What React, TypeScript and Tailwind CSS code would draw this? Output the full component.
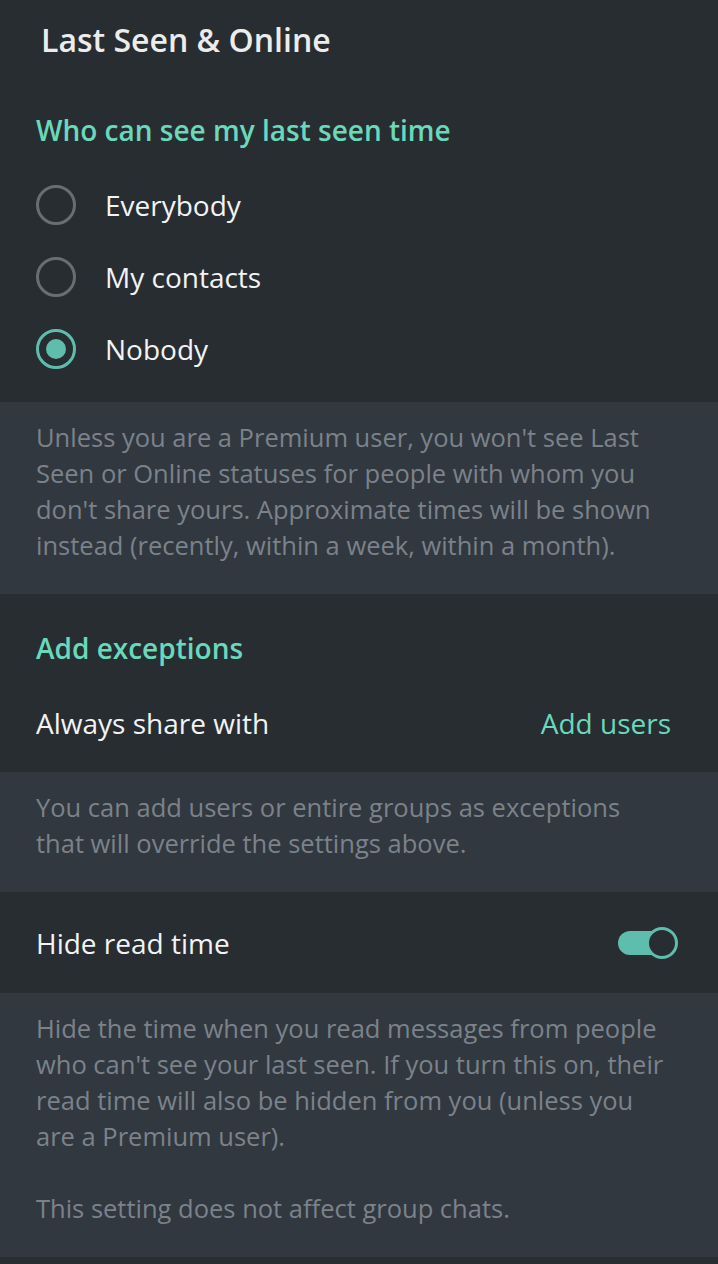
import { useState } from 'react';

const options = ['Everybody', 'My contacts', 'Nobody'];

function Radio({ checked }: { checked: boolean }) {
  return (
    <div
      className={
        'w-[40px] h-[40px] rounded-full border-[3.5px] flex items-center justify-center ' +
        (checked ? 'border-[#5fbdae]' : 'border-[#6b6c6e]')
      }
    >
      {checked && <div className="w-[20px] h-[20px] rounded-full bg-[#5fbdae]" />}
    </div>
  );
}

function Toggle({ on }: { on: boolean }) {
  return (
    <div className="relative w-[60px] h-[32px] flex items-center">
      <div className={'w-[46px] h-[24px] rounded-full ' + (on ? 'bg-[#5fbdae]' : 'bg-[#5d6168]')} />
      <div
        className={
          'absolute top-0 w-[32px] h-[32px] rounded-full border-[3px] bg-[#282d32] ' +
          (on ? 'right-0 border-[#5fbdae]' : 'left-0 border-[#5d6168]')
        }
      />
    </div>
  );
}

function Note({ children }: { children: React.ReactNode }) {
  return (
    <div className="bg-[#313840] pl-[36px] pr-[46px] pt-[17px] pb-[31px] text-[25.5px] leading-[36px] text-[#7c828a]">
      {children}
    </div>
  );
}

export default function App() {
  const [choice, setChoice] = useState(2);
  const [hideRead, setHideRead] = useState(true);

  return (
    <div
      className="w-[718px] min-h-[1264px] bg-[#282d32] text-[#f2f3f4]"
      style={{ fontFamily: '"Open Sans", "Noto Sans", sans-serif' }}
    >
      <div className="h-[80px] flex items-center px-[41px] text-[32px] font-semibold text-[#ececec]">
        Last Seen &amp; Online
      </div>

      <div className="pt-[30px] pb-[17px]">
        <div className="px-[36px] h-[40px] flex items-center text-[28px] font-semibold text-[#6ad8bb] mb-[19px]">
          Who can see my last seen time
        </div>
        {options.map((label, i) => (
          <div
            key={label}
            className="h-[72px] flex items-center px-[36px] gap-[29px] text-[28px] cursor-pointer"
            onClick={() => setChoice(i)}
          >
            <Radio checked={choice === i} />
            <span>{label}</span>
          </div>
        ))}
      </div>

      <Note>
        Unless you are a Premium user, you won't see Last Seen or Online statuses for people with whom you
        don't share yours. Approximate times will be shown instead (recently, within a week, within a month).
      </Note>

      <div className="pt-[34px]">
        <div className="px-[36px] h-[40px] flex items-center text-[28px] font-semibold text-[#6ad8bb] mb-[6px]">
          Add exceptions
        </div>
        <div className="h-[98px] flex items-center justify-between pl-[36px] pr-[47px] text-[28px]">
          <span>Always share with</span>
          <span className="text-[#6ad8bb]">Add users</span>
        </div>
      </div>

      <Note>
        You can add users or entire groups as exceptions that will override the settings above.
      </Note>

      <div
        className="h-[101px] flex items-center justify-between pl-[36px] pr-[40px] text-[28px] cursor-pointer"
        onClick={() => setHideRead(!hideRead)}
      >
        <span>Hide read time</span>
        <Toggle on={hideRead} />
      </div>

      <Note>
        <p>
          Hide the time when you read messages from people who can't see your last seen. If you turn this on,
          their read time will also be hidden from you (unless you are a Premium user).
        </p>
        <p className="mt-[36px]">This setting does not affect group chats.</p>
      </Note>
    </div>
  );
}
